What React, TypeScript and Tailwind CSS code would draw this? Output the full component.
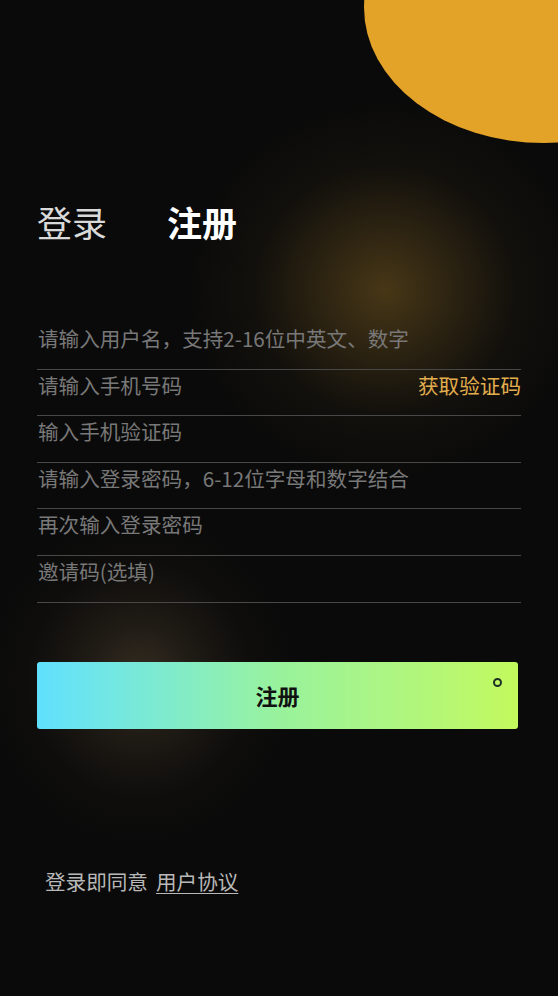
import React from "react";

const rows = [
  "请输入用户名，支持2-16位中英文、数字",
  "请输入手机号码",
  "输入手机验证码",
  "请输入登录密码，6-12位字母和数字结合",
  "再次输入登录密码",
  "邀请码(选填)",
];

export default function App() {
  return (
    <div
      className="relative min-h-[996px] w-full overflow-hidden bg-[#0a0a0a] bg-[radial-gradient(ellipse_200px_190px_at_385px_290px,rgba(78,60,24,0.9)_0%,rgba(62,48,21,0.7)_30%,rgba(34,28,16,0.35)_65%,rgba(10,10,10,0)_100%),radial-gradient(ellipse_160px_170px_at_140px_680px,rgba(58,49,36,0.9)_0%,rgba(44,37,27,0.6)_35%,rgba(24,21,17,0.3)_70%,rgba(10,10,10,0)_100%)]"
      style={{ fontFamily: '"Noto Sans CJK SC", "Noto Sans", sans-serif' }}
    >
      <div className="absolute left-[364px] top-[-128px] h-[271px] w-[360px] rounded-[50%] bg-[#e3a228]" />

      <div className="relative px-[37px]">
        <div className="mt-[200px] flex h-[44px] items-center gap-[60px] text-[35px] leading-[44px]">
          <span className="text-[#d9d9d9]">登录</span>
          <span className="font-bold text-white">注册</span>
        </div>

        <div className="mt-[79px] flex flex-col">
          {rows.map((r, i) => (
            <div
              key={i}
              className="flex h-[46.6px] items-start justify-between border-b border-[#484848] pl-[1px] text-[20.6px] leading-[31px]"
            >
              <span className="text-[#787878]">{r}</span>
              {i === 1 && <span className="text-[#e2ae4e]">获取验证码</span>}
            </div>
          ))}
        </div>

        <div className="relative mt-[59px] flex h-[67px] w-[481px] items-center justify-center rounded-[3px] bg-gradient-to-r from-[#60e0fe] via-[#98f29c] to-[#c2f95c]">
          <span className="text-[22px] font-bold text-[#111111]">注册</span>
          <span className="absolute right-[16px] top-[16px] h-[9px] w-[9px] rounded-full border-2 border-[#1f2f25]" />
        </div>

        <div className="mt-[137px] pl-[8px] text-[20.6px] leading-[30px] text-[#b8b8b8]">
          登录即同意<span className="ml-[8px] underline decoration-1 underline-offset-[3px]">用户协议</span>
        </div>
      </div>
    </div>
  );
}
